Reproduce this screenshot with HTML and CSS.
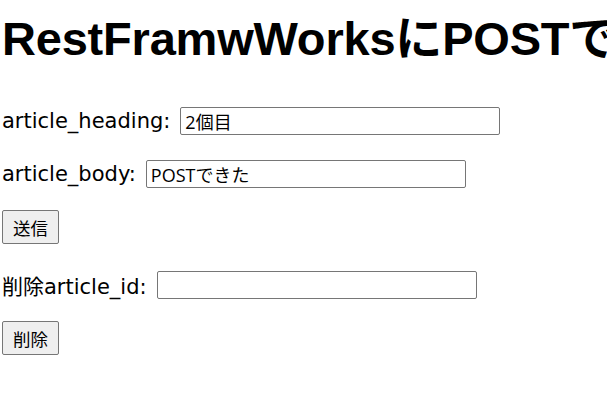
FILE: index.html
```html
<!DOCTYPE html>
<html lang="ja">
<head>
<meta charset="utf-8">
<link rel="stylesheet" href="styles.css">
</head>
<body>
<h1 class="title">RestFramwWorksにPOSTで</h1>
<form class="form">
  <p class="row"><label class="label">article_heading:</label><input class="field" type="text" value="2個目"></p>
  <p class="row"><label class="label">article_body:</label><input class="field" type="text" value="POSTできた"></p>
  <p class="row btnrow"><button class="btn" type="button">送信</button></p>
</form>
<form class="form second">
  <p class="row"><label class="label">削除article_id:</label><input class="field" type="text" value=""></p>
  <p class="row btnrow"><button class="btn" type="button">削除</button></p>
</form>
</body>
</html>
```
FILE: styles.css
```css
html, body {
  margin: 0;
  background: #fff;
  overflow: hidden;
}
body {
  padding: 0 0 0 2px;
  font-family: "DejaVu Sans", "Noto Sans CJK JP", sans-serif;
  color: #000;
}
.title {
  font-size: 47px;
  font-weight: bold;
  white-space: nowrap;
  margin: 0;
  padding-top: 14px;
  line-height: 50px;
  letter-spacing: -0.2px;
  font-family: "Liberation Sans", "Noto Sans CJK JP", sans-serif;
}
.form {
  margin: 40px 0 0 0;
}
.form.second {
  margin-top: 24px;
}
.row {
  display: flex;
  align-items: center;
  height: 33px;
  margin: 0 0 20px 0;
  font-size: 21px;
}
.btnrow {
  height: 34px;
}
.label {
  margin-right: 10px;
}
.field {
  box-sizing: border-box;
  width: 320px;
  height: 28px;
  border: 1px solid #767676;
  border-radius: 2px;
  padding: 1px 4px;
  font-size: 18px;
  font-family: "Open Sans", "Noto Sans CJK JP", sans-serif;
  color: #000;
  background: #fff;
}
.btn {
  box-sizing: border-box;
  width: 57px;
  height: 34px;
  background: #efefef;
  border: 1px solid #767676;
  border-radius: 2px;
  font-size: 17.5px;
  font-family: "Noto Sans CJK JP", sans-serif;
  color: #000;
  padding: 0;
}
```
